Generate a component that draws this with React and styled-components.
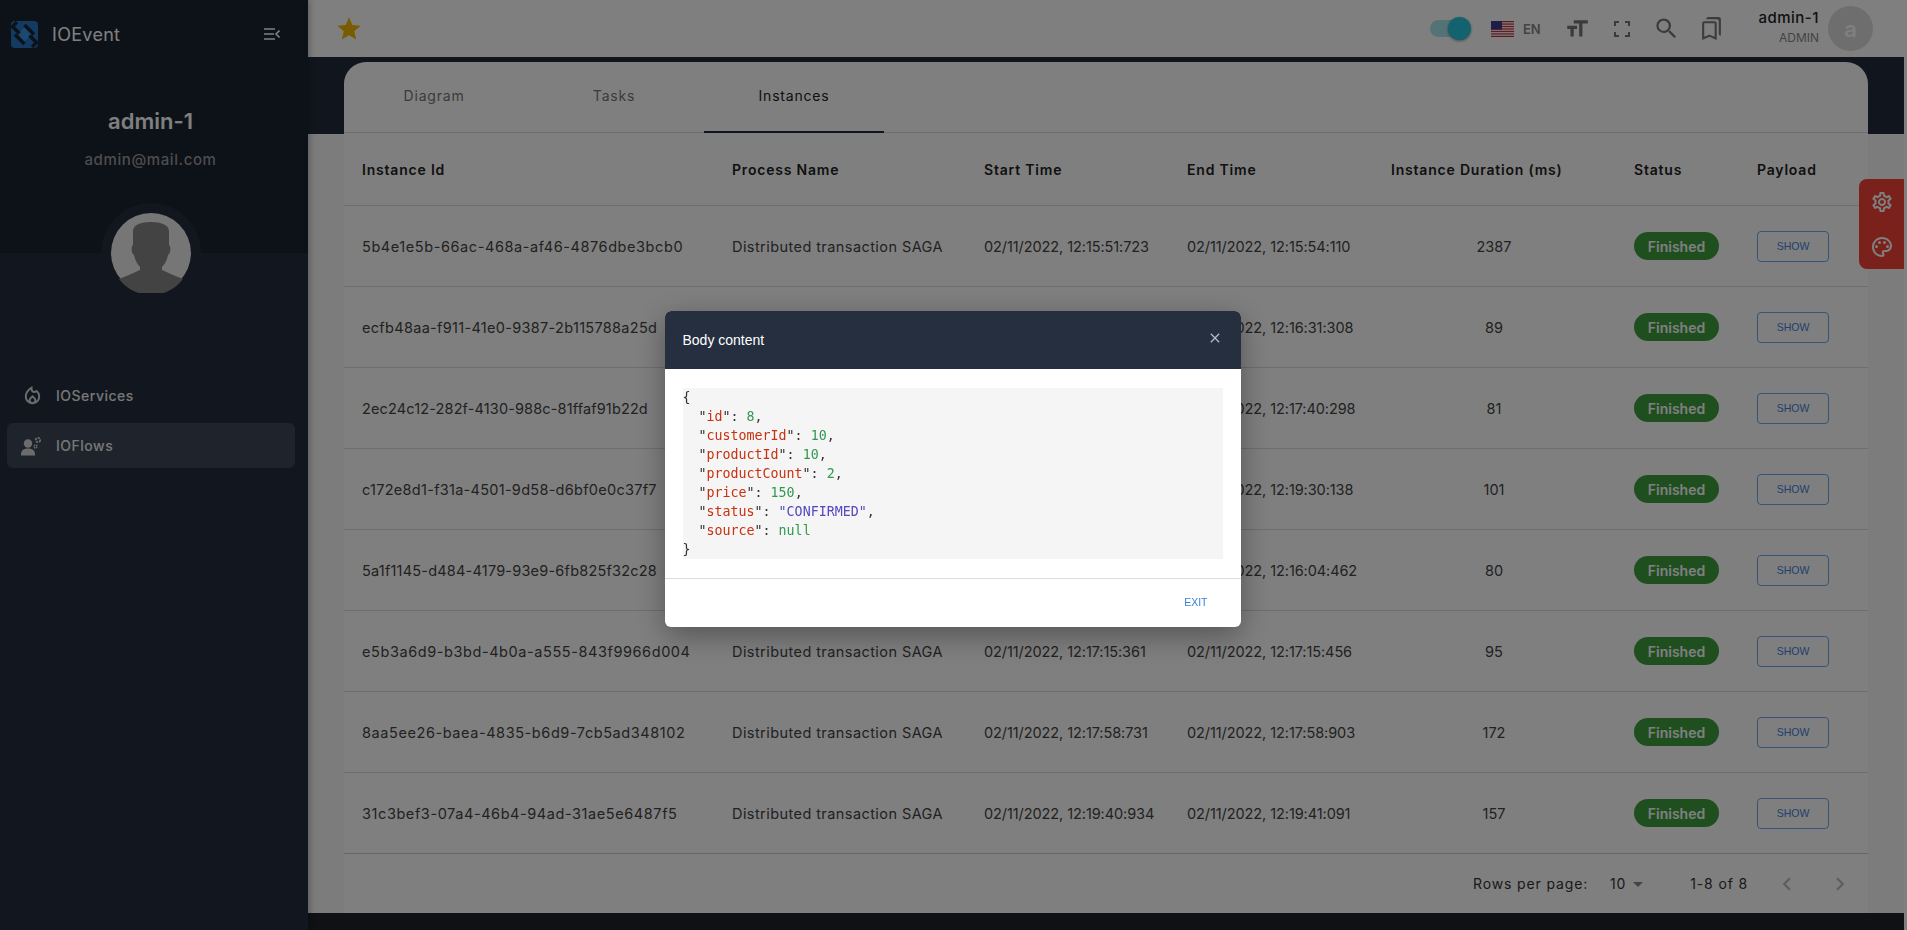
import React from 'react';
import styled, { createGlobalStyle } from 'styled-components';
import {
  MdArrowDropDown,
  MdChevronLeft,
  MdChevronRight,
  MdClose,
  MdFormatSize,
  MdOutlineBookmarks,
  MdOutlineLocalFireDepartment,
  MdOutlinePalette,
  MdOutlineSettings,
  MdSearch,
  MdStar,
} from 'react-icons/md';

// last value is the letter spacing that gives each id its width in the picture
const rows = [
  ['5b4e1e5b-66ac-468a-af46-4876dbe3bcb0', '02/11/2022, 12:15:51:723', '02/11/2022, 12:15:54:110', 2387, 0.58],
  ['ecfb48aa-f911-41e0-9387-2b115788a25d', '02/11/2022, 12:16:31:219', '02/11/2022, 12:16:31:308', 89, 0.31],
  ['2ec24c12-282f-4130-988c-81ffaf91b22d', '02/11/2022, 12:17:40:217', '02/11/2022, 12:17:40:298', 81, 0.14],
  ['c172e8d1-f31a-4501-9d58-d6bf0e0c37f7', '02/11/2022, 12:19:30:037', '02/11/2022, 12:19:30:138', 101, 0.28],
  ['5a1f1145-d484-4179-93e9-6fb825f32c28', '02/11/2022, 12:16:04:382', '02/11/2022, 12:16:04:462', 80, 0.21],
  ['e5b3a6d9-b3bd-4b0a-a555-843f9966d004', '02/11/2022, 12:17:15:361', '02/11/2022, 12:17:15:456', 95, 0.58],
  ['8aa5ee26-baea-4835-b6d9-7cb5ad348102', '02/11/2022, 12:17:58:731', '02/11/2022, 12:17:58:903', 172, 0.58],
  ['31c3bef3-07a4-46b4-94ad-31ae5e6487f5', '02/11/2022, 12:19:40:934', '02/11/2022, 12:19:41:091', 157, 0.58],
];

function Logo() {
  return (
    <svg width="27" height="27" viewBox="0 0 27 27">
      <rect width="27" height="27" rx="4" fill="#2676c4" />
      <path d="M13.5 6.5l7 7-7 7-7-7z" fill="#3a92e0" />
      <path d="M6 1L1.5 5.5l7 7M4 13.5l9.5 9.5M21 26l4.5-4.5-7-7M23 13.5L13.5 4" stroke="#1a2230" strokeWidth="3.4" fill="none" />
    </svg>
  );
}

function CollapseIcon() {
  return (
    <svg width="16" height="12" viewBox="0 0 16 12" fill="none" stroke="currentColor" strokeWidth="1.6">
      <path d="M0 1h11M0 6h10M0 11h11M15.5 2.5L12 6l3.5 3.5" />
    </svg>
  );
}

function Silhouette() {
  return (
    <svg width="80" height="80" viewBox="0 0 80 80">
      <circle cx="40" cy="40" r="40" fill="#ececec" />
      <path
        d="M22 18c0-6 8-9 18-9s18 3 18 9v14c2 1 2 8-1 10-1 5-3 9-6 12v3l11 5 10 4a40 40 0 0 1-64 0l10-4 11-5v-3c-3-3-5-7-6-12-3-2-3-9-1-10z"
        fill="#868686"
      />
    </svg>
  );
}

function FlowIcon() {
  return (
    <svg width="22" height="20" viewBox="0 0 22 20" fill="currentColor">
      <circle cx="7" cy="7.5" r="4.2" />
      <path d="M0 18c0-3.6 3.4-5.4 7-5.4s7 1.8 7 5.4v1.4H0z" />
      <circle cx="17" cy="4" r="2.2" fill="none" stroke="currentColor" strokeWidth="1.8" strokeDasharray="2 1" />
      <circle cx="14.5" cy="10.5" r="1.5" fill="none" stroke="currentColor" strokeWidth="1.4" strokeDasharray="1.4 .8" />
    </svg>
  );
}

function FullscreenIcon() {
  return (
    <svg width="16" height="16" viewBox="0 0 16 16" fill="none" stroke="currentColor" strokeWidth="2">
      <path d="M1 5V1h4M11 1h4v4M15 11v4h-4M5 15H1v-4" />
    </svg>
  );
}

function FlagUS() {
  return (
    <svg width="23" height="16" viewBox="0 0 23 16">
      <rect width="23" height="16" fill="#fff" />
      {[0, 2.46, 4.92, 7.38, 9.84, 12.3, 14.76].map((y) => (
        <rect key={y} y={y} width="23" height="1.24" fill="#c8313e" />
      ))}
      <rect width="11" height="8.6" fill="#3c3b8e" />
    </svg>
  );
}

function Key({ name }) {
  return (
    <>
      {'  "'}
      <KeyName>{name}</KeyName>
      {'": '}
    </>
  );
}

export default function App() {
  return (
    <Shell>
      <GlobalStyle />
      <Sidebar>
        <Brand>
          <Logo />
          <BrandName>IOEvent</BrandName>
          <CollapseButton>
            <CollapseIcon />
          </CollapseButton>
        </Brand>
        <UserName>admin-1</UserName>
        <UserMail>admin@mail.com</UserMail>
        <AvatarRing>
          <Silhouette />
        </AvatarRing>
        <Nav>
          <NavItem>
            <NavIcon>
              <MdOutlineLocalFireDepartment size={23} />
            </NavIcon>
            IOServices
          </NavItem>
          <NavItem $active>
            <NavIcon>
              <FlowIcon />
            </NavIcon>
            IOFlows
          </NavItem>
        </Nav>
      </Sidebar>

      <Main>
        <TopBar>
          <Star>
            <MdStar size={28} />
          </Star>
          <TopActions>
            <Toggle>
              <ToggleThumb />
            </Toggle>
            <Lang>
              <FlagUS />
              EN
            </Lang>
            <TopIcon>
              <MdFormatSize size={26} />
            </TopIcon>
            <TopIcon>
              <FullscreenIcon />
            </TopIcon>
            <TopIcon>
              <MdSearch size={27} />
            </TopIcon>
            <TopIcon>
              <MdOutlineBookmarks size={25} />
            </TopIcon>
            <Account>
              <AccountName>admin-1</AccountName>
              <AccountRole>ADMIN</AccountRole>
            </Account>
            <AccountAvatar>a</AccountAvatar>
          </TopActions>
        </TopBar>

        <Content>
          <Card>
            <Tabs>
              <Tab>Diagram</Tab>
              <Tab>Tasks</Tab>
              <Tab $active>Instances</Tab>
            </Tabs>
            <HeadRow>
              <span>Instance Id</span>
              <span>Process Name</span>
              <span>Start Time</span>
              <span>End Time</span>
              <span>Instance Duration (ms)</span>
              <span>Status</span>
              <span>Payload</span>
            </HeadRow>
            {rows.map(([id, start, end, duration, idSpacing]) => (
              <Row key={id}>
                <Cell $spacing={idSpacing}>{id}</Cell>
                <Cell $spacing={0.43}>Distributed transaction SAGA</Cell>
                <Cell $spacing={-0.08}>{start}</Cell>
                <Cell $spacing={-0.08}>{end}</Cell>
                <DurationCell>{duration}</DurationCell>
                <Cell>
                  <StatusPill>Finished</StatusPill>
                </Cell>
                <Cell>
                  <ShowButton>SHOW</ShowButton>
                </Cell>
              </Row>
            ))}
            <Pagination>
              <span>Rows per page:</span>
              <PageSize>
                10
                <MdArrowDropDown size={24} />
              </PageSize>
              <PageRange>1-8 of 8</PageRange>
              <PageArrows>
                <MdChevronLeft size={26} />
                <MdChevronRight size={26} />
              </PageArrows>
            </Pagination>
          </Card>
        </Content>
        <BottomBar />
        <SideTools>
          <MdOutlineSettings size={24} />
          <MdOutlinePalette size={24} />
        </SideTools>
      </Main>
      <Gutter />

      <Overlay>
        <Modal>
          <ModalHead>
            Body content
            <ModalClose>
              <MdClose size={16} />
            </ModalClose>
          </ModalHead>
          <ModalBody>
            <Code>
              {'{\n'}
              <Key name="id" />
              <Num>8</Num>
              {',\n'}
              <Key name="customerId" />
              <Num>10</Num>
              {',\n'}
              <Key name="productId" />
              <Num>10</Num>
              {',\n'}
              <Key name="productCount" />
              <Num>2</Num>
              {',\n'}
              <Key name="price" />
              <Num>150</Num>
              {',\n'}
              <Key name="status" />
              <Str>"CONFIRMED"</Str>
              {',\n'}
              <Key name="source" />
              <Num>null</Num>
              {'\n}'}
            </Code>
          </ModalBody>
          <ModalFoot>
            <ExitButton>EXIT</ExitButton>
          </ModalFoot>
        </Modal>
      </Overlay>
    </Shell>
  );
}

const GlobalStyle = createGlobalStyle`
  html, body {
    margin: 0;
    height: 930px;
    overflow: hidden;
    background: #fff;
  }
  * {
    box-sizing: border-box;
  }
`;

const Shell = styled.div`
  display: flex;
  width: 1907px;
  height: 930px;
  font-family: Inter, 'Liberation Sans', sans-serif;
  font-size: 14px;
  color: #444;
`;

const Sidebar = styled.aside`
  width: 308px;
  flex: none;
  padding-right: 7px;
  display: flex;
  flex-direction: column;
  align-items: center;
  background: linear-gradient(#1a2230 253px, #232d3e 253px);
  box-shadow: 2px 0 6px rgba(0, 0, 0, 0.25);
  z-index: 1;
`;

const Brand = styled.div`
  width: 100%;
  height: 68px;
  display: flex;
  align-items: center;
  padding: 0 21px 0 11px;
  color: #fff;
`;

const BrandName = styled.span`
  margin-left: 14px;
  font-size: 18px;
  letter-spacing: 0.3px;
`;

const CollapseButton = styled.span`
  margin-left: auto;
  display: flex;
`;

const UserName = styled.div`
  margin-top: 38px;
  font-size: 22px;
  line-height: 30px;
  font-weight: 600;
  color: #fff;
`;

const UserMail = styled.div`
  margin-top: 15px;
  font-size: 15px;
  line-height: 18px;
  letter-spacing: 0.6px;
  font-weight: 500;
  color: #9a9a9a;
`;

const AvatarRing = styled.div`
  margin-top: 34px;
  width: 100px;
  height: 100px;
  border-radius: 50%;
  background: #232d3e;
  display: flex;
  align-items: center;
  justify-content: center;
`;

const Nav = styled.nav`
  width: 100%;
  margin-top: 70px;
  padding: 0 6px 0 7px;
  display: flex;
  flex-direction: column;
  gap: 5px;
`;

const NavItem = styled.div`
  height: 45px;
  display: flex;
  align-items: center;
  border-radius: 6px;
  font-weight: 500;
  letter-spacing: 0.5px;
  color: #eee;
  background: ${(p) => (p.$active ? '#3e4859' : 'transparent')};
`;

const NavIcon = styled.span`
  width: 49px;
  padding-left: 14px;
  display: flex;
  color: #d8d8d8;
`;

const Main = styled.div`
  position: relative;
  width: 1596px;
  flex: none;
  display: flex;
  flex-direction: column;
`;

const TopBar = styled.header`
  height: 57px;
  flex: none;
  display: flex;
  align-items: center;
  justify-content: space-between;
  padding: 0 31px 0 27px;
  background: #fff;
`;

const Star = styled.span`
  display: flex;
  color: #f5b800;
`;

const TopActions = styled.div`
  display: flex;
  align-items: center;
`;

const Toggle = styled.span`
  position: relative;
  width: 32px;
  height: 17px;
  border-radius: 9px;
  background: #a8e6ec;
  margin-right: 29px;
`;

const ToggleThumb = styled.span`
  position: absolute;
  right: -9px;
  top: -3px;
  width: 23px;
  height: 23px;
  border-radius: 50%;
  background: #27c4e0;
  box-shadow: 0 1px 3px rgba(0, 0, 0, 0.4);
`;

const Lang = styled.span`
  display: flex;
  align-items: center;
  gap: 9px;
  width: 63px;
  font-size: 13px;
  font-weight: 600;
  color: #888;
`;

const TopIcon = styled.span`
  width: 45px;
  display: flex;
  justify-content: center;
  color: #777;
`;

const Account = styled.div`
  margin-left: 6px;
  padding-bottom: 4px;
  width: 79px;
  text-align: right;
`;

const AccountName = styled.div`
  font-size: 15px;
  line-height: 18px;
  font-weight: 500;
  letter-spacing: 0.5px;
  white-space: nowrap;
  color: #222;
`;

const AccountRole = styled.div`
  margin-top: 4px;
  font-size: 12px;
  line-height: 14px;
  color: #888;
`;

const AccountAvatar = styled.div`
  margin-left: 9px;
  width: 45px;
  height: 45px;
  border-radius: 50%;
  display: flex;
  align-items: center;
  justify-content: center;
  background: #dcdcdc;
  color: #fff;
  font-size: 22px;
  font-weight: 600;
`;

const Content = styled.main`
  flex: 1;
  padding: 5px 36px 0;
  background: linear-gradient(#222c3c 77px, #f8f8f8 77px);
`;

const Card = styled.section`
  height: 100%;
  background: #fff;
  border-radius: 22px 22px 0 0;
  display: flex;
  flex-direction: column;
`;

const Tabs = styled.div`
  height: 71px;
  flex: none;
  display: flex;
  border-bottom: 1px solid #ddd;
`;

const Tab = styled.div`
  width: 180px;
  display: flex;
  align-items: center;
  justify-content: center;
  padding-bottom: 3px;
  letter-spacing: 0.8px;
  color: ${(p) => (p.$active ? '#222' : '#777')};
  border-bottom: 2px solid ${(p) => (p.$active ? '#1f2a3b' : 'transparent')};
  margin-bottom: -1px;
`;

const columns = '370px 252px 203px 204px 243px 123px 129px';

const HeadRow = styled.div`
  height: 73px;
  flex: none;
  display: grid;
  grid-template-columns: ${columns};
  align-items: center;
  padding-left: 18px;
  border-bottom: 1px solid #ddd;
  font-weight: 600;
  letter-spacing: 0.8px;
  white-space: nowrap;
  color: #222;
`;

const Row = styled.div`
  height: 81px;
  flex: none;
  display: grid;
  grid-template-columns: ${columns};
  align-items: center;
  padding-left: 18px;
  border-bottom: 1px solid #ddd;
  font-size: 14.5px;
`;

const Cell = styled.span`
  display: flex;
  letter-spacing: ${(p) => p.$spacing || 0}px;
  white-space: nowrap;
`;

const DurationCell = styled.span`
  padding-right: 37px;
  text-align: center;
`;

const StatusPill = styled.span`
  display: inline-flex;
  align-items: center;
  justify-content: center;
  width: 85px;
  height: 28px;
  border-radius: 14px;
  background: #3f9e3e;
  color: #fff;
  font-size: 14px;
  font-weight: 600;
`;

const ShowButton = styled.button`
  width: 72px;
  height: 31px;
  border: 1px solid #6fa8e8;
  border-radius: 4px;
  background: transparent;
  font-family: 'Liberation Sans', sans-serif;
  font-size: 10.5px;
  color: #3f7ee0;
`;

const Pagination = styled.footer`
  flex: 1;
  display: flex;
  align-items: center;
  justify-content: flex-end;
  border-top: 1px solid #ccc;
  margin-top: -1px;
  padding-right: 15px;
  letter-spacing: 0.85px;
  color: #333;
`;

const PageSize = styled.span`
  display: flex;
  align-items: center;
  margin-left: 22px;
  color: #333;
  svg {
    color: #888;
  }
`;

const PageRange = styled.span`
  margin-left: 40px;
`;

const PageArrows = styled.span`
  display: flex;
  gap: 27px;
  margin-left: 26px;
  color: #bbb;
`;

const BottomBar = styled.div`
  height: 17px;
  flex: none;
  background: #1e2228;
`;

const SideTools = styled.div`
  position: absolute;
  right: 0;
  top: 179px;
  width: 45px;
  height: 90px;
  border-radius: 8px 0 0 8px;
  background: #f44336;
  color: #fff;
  display: flex;
  flex-direction: column;
  align-items: center;
  justify-content: center;
  gap: 21px;
`;

const Gutter = styled.div`
  flex: 1;
  background: #fff;
`;

const Overlay = styled.div`
  position: fixed;
  inset: 0;
  z-index: 10;
  display: flex;
  align-items: center;
  justify-content: center;
  padding: 8px 2px 0 0;
  background: rgba(0, 0, 0, 0.5);
`;

const Modal = styled.div`
  width: 576px;
  height: 316px;
  border-radius: 6px;
  overflow: hidden;
  background: #fff;
  box-shadow: 0 8px 30px rgba(0, 0, 0, 0.35);
  display: flex;
  flex-direction: column;
  font-family: 'Liberation Sans', sans-serif;
`;

const ModalHead = styled.div`
  height: 58px;
  flex: none;
  display: flex;
  align-items: center;
  justify-content: space-between;
  padding: 0 18px;
  background: #252f3f;
  color: #fff;
  font-size: 14px;
`;

const ModalClose = styled.span`
  display: flex;
  margin-top: -5px;
  color: #b5bac2;
`;

const ModalBody = styled.div`
  padding: 19px 18px;
  height: 210px;
  flex: none;
  border-bottom: 1px solid #ddd;
`;

const Code = styled.pre`
  margin: 0;
  height: 171px;
  background: #f5f5f5;
  font-family: 'DejaVu Sans Mono', monospace;
  font-size: 13.3px;
  line-height: 19px;
  color: #333;
`;

const KeyName = styled.span`
  color: #c8300f;
`;

const Num = styled.span`
  color: #2f9a4f;
`;

const Str = styled.span`
  color: #5547c0;
`;

const ModalFoot = styled.div`
  flex: 1;
  display: flex;
  align-items: center;
  justify-content: flex-end;
  padding: 0 33px 2px 0;
`;

const ExitButton = styled.span`
  font-size: 10.5px;
  color: #3b82d6;
`;
